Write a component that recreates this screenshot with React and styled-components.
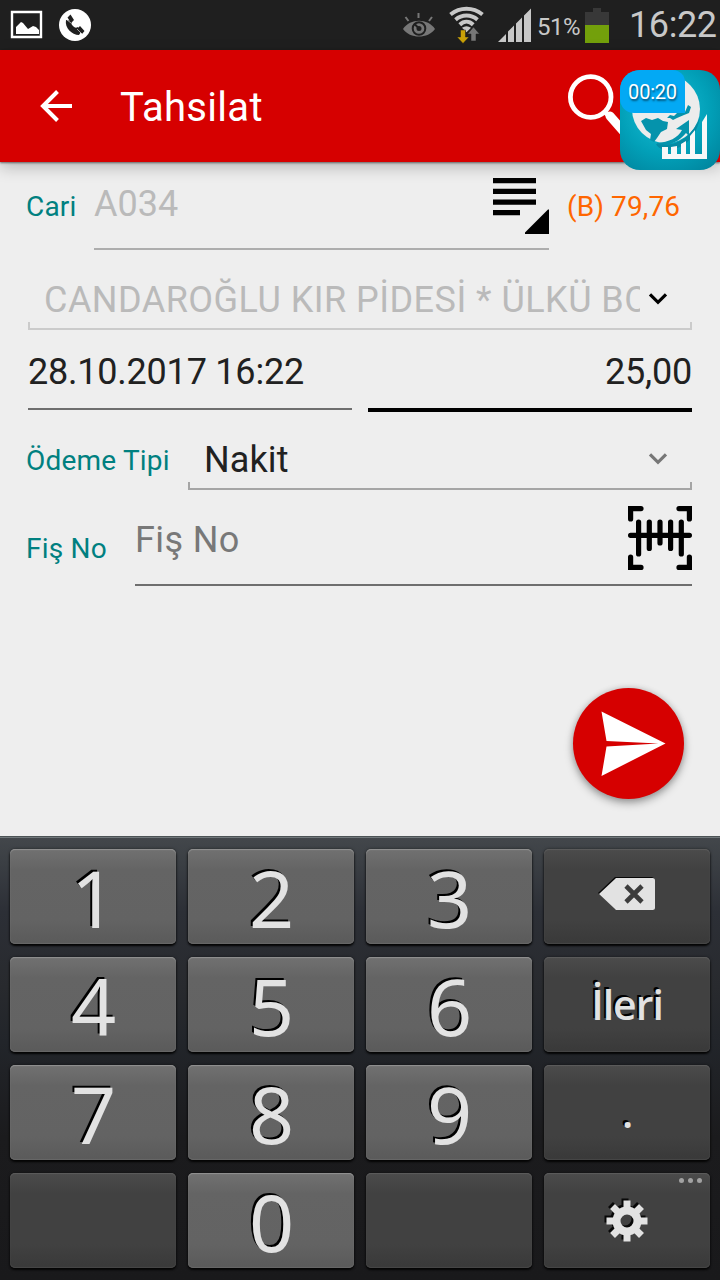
import React from 'react'
import styled, { createGlobalStyle, css } from 'styled-components'

const GlobalStyle = createGlobalStyle`
	* {
		box-sizing: border-box;
	}

	body {
		margin: 0;
		background: #eee;
		font-family: Roboto, 'Noto Sans', sans-serif;
	}

	svg {
		display: block;
		flex: none;
	}
`

const Screen = styled.div`
	display: flex;
	flex-direction: column;
	position: relative;
	width: 720px;
	height: 1280px;
	overflow: hidden;
	background: #eee;
`

const StatusBar = styled.header`
	display: flex;
	align-items: center;
	height: 50px;
	padding: 0 3px 0 10px;
	background: #1f1f1f;
	color: #c8c8c8;
`

const Notifications = styled.div`
	display: flex;
	align-items: center;
	gap: 16px;
	flex: 1;
`

const Indicators = styled.div`
	display: flex;
	align-items: center;
	gap: 13px;
`

const Percent = styled.span`
	width: 43px;
	margin: 3px 5px 0;
	font-size: 24px;
	line-height: 28px;
	letter-spacing: -0.5px;
	white-space: nowrap;
`

const Clock = styled.span`
	width: 88px;
	margin-left: 20px;
	font-size: 36px;
	line-height: 50px;
	letter-spacing: -0.4px;
	white-space: nowrap;
`

const AppBar = styled.nav`
	display: flex;
	align-items: center;
	position: relative;
	z-index: 1;
	height: 112px;
	padding: 0 94px 0 40px;
	background: #d60000;
	box-shadow: 0 1px 2px rgba(0, 0, 0, 0.5), 0 5px 15px rgba(0, 0, 0, 0.24);
`

const Title = styled.h1`
	flex: 1;
	margin: 2px 0 0 48px;
	color: white;
	font-size: 40px;
	font-weight: 400;
	letter-spacing: 0.3px;
`

const CallBubble = styled.div`
	position: absolute;
	z-index: 2;
	left: 620px;
	top: 70px;
	width: 100px;
	height: 100px;
	border-radius: 20px;
	overflow: hidden;
	background: radial-gradient(circle at 45% 40%, #10b4cc 20%, #02a0b8 55%, #007f98 100%);
`

const CallTime = styled.span`
	position: absolute;
	left: 0;
	top: 0;
	width: 65px;
	height: 43px;
	border-radius: 0 12px 0 14px;
	background: #03a9f4;
	color: white;
	font-size: 20px;
	line-height: 44px;
	letter-spacing: -0.2px;
	text-align: center;
	text-shadow: 1px 2px 2px rgba(0, 0, 0, 0.5);
`

const Form = styled.main`
	flex: 1;
	padding: 0 28px;
`

const Row = styled.div`
	display: flex;
	height: ${({ height }) => height}px;
`

const DateRow = styled(Row)`
	justify-content: space-between;
`

const Label = styled.label`
	flex: none;
	width: ${({ width }) => width}px;
	margin-left: -2px;
	padding-top: ${({ top }) => top}px;
	color: #008080;
	font-size: 28px;
	line-height: 40px;
	letter-spacing: 0.2px;
	white-space: nowrap;
`

const Balance = styled(Label)`
	margin-left: 18px;
	color: #ff6600;
	letter-spacing: 0.1px;
`

const Field = styled.div`
	display: flex;
	justify-content: space-between;
	flex: ${({ width }) => (width ? 'none' : 1)};
	width: ${({ width }) => (width ? `${width}px` : 'auto')};
	height: ${({ height }) => height}px;
	padding-top: ${({ top }) => top}px;
	border-bottom: ${({ focused }) => (focused ? '4px solid #000' : '2px solid #6e6e6e')};
	color: #212121;
	font-size: 36px;
	line-height: 40px;
	letter-spacing: -0.22px;
	white-space: nowrap;

	${({ disabled }) =>
		disabled &&
		css`
			border-color: #adadad;
			color: #bababa;
			letter-spacing: 0;
		`}

	${({ alignEnd }) =>
		alignEnd &&
		css`
			justify-content: flex-end;
		`}
`

const Placeholder = styled.span`
	color: #787878;
	letter-spacing: 0.4px;
`

const ListIcon = styled.svg`
	margin-top: -6px;
`

const ScanIcon = styled.svg`
	margin-top: -14px;
`

const Select = styled.div`
	display: flex;
	flex-direction: column;
	flex: 1;
	min-width: 0;
`

const SelectValue = styled.div`
	display: flex;
	flex: 1;
	padding: ${({ top }) => top}px 24px 0 16px;
	color: ${({ disabled }) => (disabled ? '#bababa' : '#212121')};
	font-size: 36px;
	line-height: 40px;
	letter-spacing: ${({ disabled }) => (disabled ? 0.47 : 0.1)}px;
`

const SelectText = styled.span`
	flex: 1;
	height: 48px;
	margin: -6px 8px 0 0;
	padding-top: 6px;
	overflow: hidden;
	white-space: nowrap;
`

const Bracket = styled.div`
	flex: none;
	height: 8px;
	border: 2px solid ${({ disabled }) => (disabled ? '#cbcbcb' : '#a5a5a5')};
	border-top: 0;
`

const Chevron = styled.svg`
	margin-top: 13px;
`

const SendButton = styled.button`
	display: flex;
	align-items: center;
	justify-content: center;
	position: absolute;
	left: 572.5px;
	top: 688.3px;
	width: 111px;
	height: 111px;
	padding: 0;
	border: 0;
	border-radius: 50%;
	background: #d60000;
	box-shadow: 0 4px 9px rgba(0, 0, 0, 0.34), 0 0 6px rgba(0, 0, 0, 0.14);
`

const Keyboard = styled.section`
	display: grid;
	grid-template-columns: repeat(4, 166px);
	grid-auto-rows: 95px;
	gap: 13px 12px;
	height: 444px;
	padding: 12px 10px 0;
	border-top: 1px solid #4c5355;
	background: linear-gradient(#43474b 0, #3b3f44 25px, #2c2f36 75px, #282a2e 150px, #22252a 205px, #1b1b1d 300px, #19191b 100%);
	box-shadow: inset 0 1px #70777a;
`

const Key = styled.button`
	display: flex;
	align-items: center;
	justify-content: center;
	position: relative;
	padding: 2px 0 0 1px;
	border: 0;
	border-radius: 5px;
	background: linear-gradient(#717171, #646464 22%, #636363 75%, #5a5a5a);
	box-shadow: inset 0 1px 1px #929292, inset 0 -1px 1px #686868, 0 2px 2px #050505, 0 0 3px rgba(0, 0, 0, 0.5);
	color: #e2e2e2;
	font-family: 'Noto Sans', 'Open Sans', sans-serif;
	font-size: 79px;
	line-height: 93px;
	text-shadow: -2px -2px #000;

	${({ dark }) =>
		dark &&
		css`
			padding: 0;
			background: linear-gradient(#4b4b4b, #414141 22%, #414141 75%, #393939);
			box-shadow: inset 0 1px 1px #5c5c5c, inset 0 -1px 1px #474747, 0 2px 2px #050505, 0 0 3px rgba(0, 0, 0, 0.5);
			font-family: 'Open Sans', 'Noto Sans', sans-serif;
			font-size: 41px;
			font-weight: 600;
			letter-spacing: -1px;
		`}
`

const MoreDots = styled.span`
	display: flex;
	gap: 4px;
	position: absolute;
	top: 5px;
	right: 8px;

	i {
		width: 5px;
		height: 5px;
		border-radius: 50%;
		background: #a2a2a2;
	}
`

const KeyIcon = styled.svg`
	margin-top: ${({ $shift }) => $shift}px;
	overflow: visible;
	filter: drop-shadow(-${({ $depth }) => $depth}px -${({ $depth }) => $depth}px 0 #080808);
`

const PictureIcon = () => (
	<svg width="33" height="30" viewBox="0 0 33 30">
		<path d="M2 2h29v25H2z" fill="none" stroke="#fff" strokeWidth="2.4" />
		<path d="M6 24v-7l5-5 2 1 5 6 5-3 3 1 3 3v4z" fill="#fff" />
	</svg>
)

const CallIcon = () => (
	<svg width="32" height="32" viewBox="0 0 32 32">
		<circle cx="16" cy="16" r="16" fill="#fff" />
		<path d="M7 11c-1.500 8 6 15 13 15l2-3-3-5c-2 1-3 1-5-1s-2-3-1-5z" fill="#1f1f1f" />
		<path d="M8.500 8.500 11.500 5.500 15 11 12 14z M18.500 19.500 21 17 25.500 22 23 25z" fill="#1f1f1f" />
		<path d="M7.500 10.500 12 14M18 20l5 5" stroke="#fff" strokeWidth=".6" />
	</svg>
)

const EyeIcon = () => (
	<svg width="34" height="26" viewBox="0 0 34 26">
		<path d="M1 17C8 6 26 6 33 17 26 27 8 27 1 17z" fill="#777" />
		<circle cx="17" cy="16.500" r="6.300" fill="none" stroke="#1f1f1f" strokeWidth="2" />
		<circle cx="17" cy="16.500" r="2.500" fill="#1f1f1f" />
		<path d="M12.500 12l4.500 4.500" stroke="#1f1f1f" strokeWidth="2" />
		<path d="M16.500 1v5M3.500 5l3 4M30 5l-3 4" stroke="#777" strokeWidth="2" />
	</svg>
)

const WifiIcon = () => (
	<svg width="36" height="38" viewBox="0 0 36 38">
		<g fill="none" stroke="#c8c8c8" strokeWidth="4">
			<path d="M1.500 8.500C11 .8 24 .8 33.500 8.500" />
			<path d="M6.500 13.700c6.500-5.500 15.500-5.500 22 0" />
			<path d="M10.800 18.700c4-3.800 9.400-3.800 13.400 0" />
		</g>
		<path d="M13 21.800c3-2 6-2 9 0l-4.500 4.500z" fill="#c8c8c8" />
		<path d="M11.500 24h5v7H20l-6 6.500L8 31h3.500z" fill="#c9a107" stroke="#1f1f1f" strokeWidth=".5" />
		<path d="M24.500 21l6 7H27v7h-5v-7h-3.500z" fill="#777" stroke="#1f1f1f" strokeWidth=".5" />
	</svg>
)

const SignalIcon = () => (
	<svg width="34" height="34" viewBox="0 0 34 34">
		<path d="M0 34 8 26v8zM10 23.500l6-6V34h-6zM18 15.500l6-6V34h-6zM26 7.500 33 .5V34h-7z" fill="#c8c8c8" />
	</svg>
)

const BatteryIcon = () => (
	<svg width="24" height="35" viewBox="0 0 24 35">
		<path d="M8 0h8v4h8v13H0V4h8z" fill="#383838" />
		<path d="M0 17h24v18H0z" fill="#73a00b" />
	</svg>
)

const BackIcon = () => (
	<svg width="32" height="32" viewBox="0 0 32 32">
		<path d="M32 16H4M17.500 1.500 3 16l14.500 14.500" fill="none" stroke="#fff" strokeWidth="4" />
	</svg>
)

const SearchIcon = () => (
	<svg width="58" height="66" viewBox="0 0 58 66">
		<circle cx="22.700" cy="24" r="20.300" fill="none" stroke="#fff" strokeWidth="4.800" />
		<path d="M36 38l5 5" stroke="#fff" strokeWidth="5" />
		<path d="M42 43l14 16" stroke="#fff" strokeWidth="9" strokeLinecap="round" />
	</svg>
)

const GlobeChart = () => (
	<svg width="100" height="100" viewBox="0 0 100 100">
		<circle cx="46" cy="39" r="34" fill="#ececec" />
		<path d="M21 51l5-3 6 2 6-2 5 3 5 1-1 7-6 3-4 6-3 4-4-2 1-6-5-4z" fill="#0593ac" />
		<path d="M47 48l3-3 4 1 3-3 8-1 3-7 3 2-2 6-5 2-7 3-4 2-3-2z" fill="#0593ac" />
		<path d="M37 73c12-1 21-5 25-13l-6-1 13-9v16l-3-3c-7 9-17 13-29 12z" fill="#0593ac" />
		<path d="M36 74c20 4 36-7 44-27-3 19-16 33-33 33-4 0-9-2-11-6z" fill="#058ba4" />
		<path d="M42 77h6v7h3v-7l6-1v8h4V74l5-3v13h4V66l5-6v24h7V52l5-8v45H42z" fill="#f8f8f8" />
	</svg>
)

const ListGlyph = () => (
	<ListIcon width="57" height="56" viewBox="0 0 57 56">
		<path d="M1 0h43v5.300H1zM1 10.700h43V16H1zM1 21.400h43v5.300H1zM1 32h27v5.300H1zM33 56v-1.500l23-23h1V56z" />
	</ListIcon>
)

const Arrow = ({ color }) => (
	<Chevron width="20" height="12" viewBox="0 0 20 12">
		<path d="M2 1.300 10 9.300 18 1.300" fill="none" stroke={color} strokeWidth="3.200" />
	</Chevron>
)

const Barcode = () => (
	<ScanIcon width="64" height="64" viewBox="0 0 64 64">
		<g fill="none" stroke="#000" strokeWidth="5.200" strokeLinecap="round">
			<path d="M2.600 13V2.600H13M51 2.600h10.400V13M2.600 51v10.400H13M51 61.400h10.400V51" />
			<path d="M2.600 29.300h58.800M10.600 16v32M21.300 16v26.500M32 16v21M42.600 16v26.500M53.300 16v32" />
		</g>
	</ScanIcon>
)

const SendIcon = () => (
	<svg width="111" height="111" viewBox="0 0 111 111">
		<path d="M28.500 23.500l64 32-64 32.500 5-29.500 52-3-52-2.500z" fill="#fff" />
	</svg>
)

const BackspaceIcon = () => (
	<KeyIcon width="56" height="34" viewBox="0 0 56 34" $depth={1} $shift={-6}>
		<path d="M0 17 17 1h36.500Q56 1 56 3.500v27q0 2.500-2.500 2.500H17z" fill="#e2e2e2" />
		<path d="M27 9l16 16M43 9 27 25" stroke="#3c3c3c" strokeWidth="4.600" />
	</KeyIcon>
)

const GearIcon = () => (
	<KeyIcon width="42" height="42" viewBox="-21 -21 42 42" $depth={2} $shift={0}>
		<g stroke="#e2e2e2" strokeWidth="7">
			<path d="M0-20.500V-9M0 9v11.500M-20.500 0H-9M9 0h11.500" />
			<path d="M-14.500-14.500-7-7M14.500 14.500 7 7M-14.500 14.500-7 7M14.500-14.500 7-7" />
		</g>
		<circle r="10.500" fill="none" stroke="#e2e2e2" strokeWidth="8" />
	</KeyIcon>
)

const keys = [
	{ text: '1' },
	{ text: '2' },
	{ text: '3' },
	{ icon: <BackspaceIcon />, dark: true },
	{ text: '4' },
	{ text: '5' },
	{ text: '6' },
	{ text: 'İleri', dark: true },
	{ text: '7' },
	{ text: '8' },
	{ text: '9' },
	{ text: '.', dark: true },
	{ dark: true },
	{ text: '0' },
	{ dark: true },
	{ icon: <GearIcon />, dark: true, more: true }
]

const App = () => (
	<>
		<GlobalStyle />
		<Screen>
			<StatusBar>
				<Notifications>
					<PictureIcon />
					<CallIcon />
				</Notifications>
				<Indicators>
					<EyeIcon />
					<WifiIcon />
					<SignalIcon />
				</Indicators>
				<Percent>51%</Percent>
				<BatteryIcon />
				<Clock>16:22</Clock>
			</StatusBar>
			<AppBar>
				<BackIcon />
				<Title>Tahsilat</Title>
				<SearchIcon />
			</AppBar>
			<Form>
				<Row height={88}>
					<Label width={68} top={25}>Cari</Label>
					<Field width={455} height={88} top={22} disabled>
						<span>A034</span>
						<ListGlyph />
					</Field>
					<Balance width={125} top={25}>(B) 79,76</Balance>
				</Row>
				<Row height={80}>
					<Select>
						<SelectValue top={30} disabled>
							<SelectText>CANDAROĞLU KIR PİDESİ * ÜLKÜ BO</SelectText>
							<Arrow color="#000" />
						</SelectValue>
						<Bracket disabled />
					</Select>
				</Row>
				<DateRow height={82}>
					<Field width={324} height={80} top={22}>28.10.2017 16:22</Field>
					<Field width={324} height={82} top={22} focused alignEnd>25,00</Field>
				</DateRow>
				<Row height={78}>
					<Label width={162} top={29}>Ödeme Tipi</Label>
					<Select>
						<SelectValue top={28}>
							<SelectText>Nakit</SelectText>
							<Arrow color="#777" />
						</SelectValue>
						<Bracket />
					</Select>
				</Row>
				<Row height={96}>
					<Label width={109} top={39}>Fiş No</Label>
					<Field height={96} top={30}>
						<Placeholder>Fiş No</Placeholder>
						<Barcode />
					</Field>
				</Row>
			</Form>
			<Keyboard>
				{keys.map(({ text, icon, dark, more }, i) => (
					<Key key={i} dark={dark}>
						{text}
						{icon}
						{more && (
							<MoreDots>
								<i />
								<i />
								<i />
							</MoreDots>
						)}
					</Key>
				))}
			</Keyboard>
			<CallBubble>
				<GlobeChart />
				<CallTime>00:20</CallTime>
			</CallBubble>
			<SendButton>
				<SendIcon />
			</SendButton>
		</Screen>
	</>
)

export default App
